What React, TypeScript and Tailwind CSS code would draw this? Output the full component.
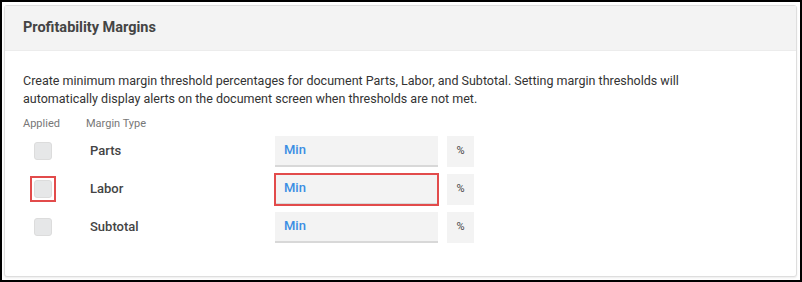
import React from "react";

const rows = [
  { label: "Parts", hl: false },
  { label: "Labor", hl: true },
  { label: "Subtotal", hl: false },
];

export default function App() {
  return (
    <div
      className="w-[802px] h-[282px] border-2 border-black bg-white pl-[2px] pt-[3px] pr-[3px] pb-[3px] box-border"
      style={{ fontFamily: "Roboto, 'Liberation Sans', sans-serif" }}
    >
      <div className="h-full border border-[#dedede] rounded-[3px] shadow-[0_1px_2px_rgba(0,0,0,0.08)] bg-white flex flex-col">
        <div className="h-[45px] bg-[#f3f3f3] flex items-center px-[18px] border-b border-[#ececec]">
          <span className="text-[14.5px] font-bold text-[#444]">Profitability Margins</span>
        </div>
        <div className="px-[18px] pt-[21px]">
          <p className="text-[12.5px] leading-[18px] text-[#333]">
            Create minimum margin threshold percentages for document Parts, Labor, and Subtotal. Setting margin thresholds will
            <br />
            automatically display alerts on the document screen when thresholds are not met.
          </p>
          <div className="mt-[8px] h-[16px] flex items-center text-[11px] text-[#777]">
            <span className="w-[63px]">Applied</span>
            <span>Margin Type</span>
          </div>
          {rows.map((r) => (
            <div key={r.label} className="h-[38px] flex items-center">
              <div className="w-[67px] pl-[11px] flex items-center">
                <div className={r.hl ? "outline-2 outline-[#e24b4b] outline-offset-2" : ""}>
                  <div className="w-[18px] h-[18px] rounded-[3px] bg-[#e6e7e8] border border-[#dcdcdc]" />
                </div>
              </div>
              <div className="w-[185px] text-[13px] font-medium text-[#444]">{r.label}</div>
              <div
                className={`w-[163px] h-[31px] bg-[#f3f3f3] border-b-2 border-[#d8d8d8] flex items-center pl-[9px] ${
                  r.hl ? "outline-2 outline-[#e24b4b] -outline-offset-1" : ""
                }`}
              >
                <span className="text-[13px] font-medium text-[#3a8ee3]">Min</span>
              </div>
              <div className="ml-[9px] w-[27px] h-[31px] bg-[#f3f3f3] flex items-center justify-center">
                <span className="text-[11px] text-[#444]">%</span>
              </div>
            </div>
          ))}
        </div>
      </div>
    </div>
  );
}
